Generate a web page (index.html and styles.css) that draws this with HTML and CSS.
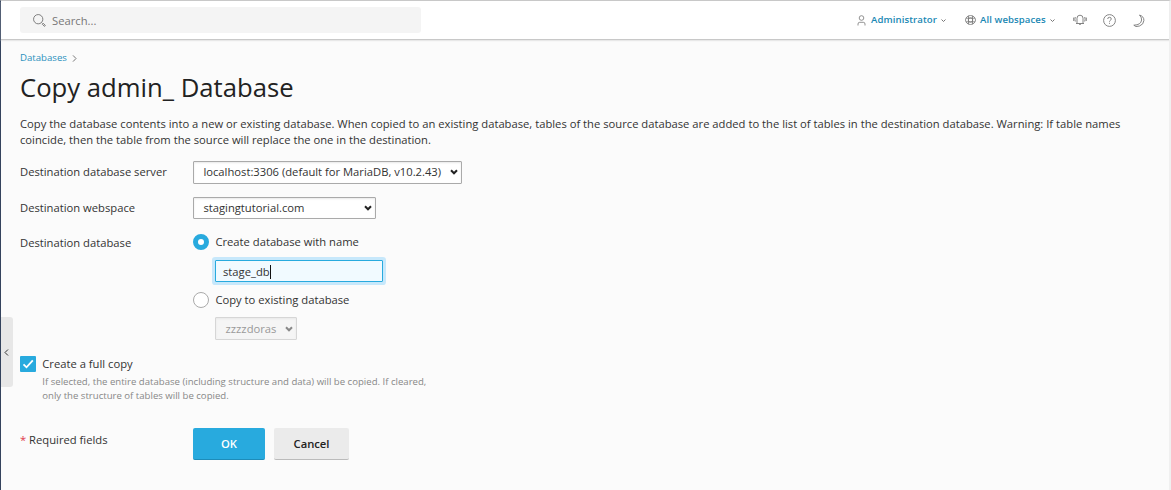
FILE: index.html
```html
<!DOCTYPE html>
<html lang="en">
<head>
<meta charset="utf-8">
<title>Copy admin_ Database</title>
<link rel="stylesheet" href="styles.css">
</head>
<body>
<div class="page">
  <header class="topbar">
    <div class="search">
      <svg class="search-icon" width="13" height="13" viewBox="0 0 14 14"><circle cx="5.6" cy="5.6" r="5"/><path d="M9.2 9.2l1 1M10 11l1-1 2.1 2a.8.8 0 0 1-1.1 1.1z"/></svg>
      <span>Search...</span>
    </div>
    <nav class="tools">
      <a class="tool user">
        <svg width="9" height="11" viewBox="0 0 9 11"><circle cx="4.5" cy="3" r="2.3"/><path d="M1 10.500V9q0-1.700 1.700-1.700h3.600Q8 7.300 8 9v1.500"/></svg>
        <span>Administrator</span>
        <svg class="caret" width="5" height="3" viewBox="0 0 5 3"><path d="M.5.5l2 2 2-2"/></svg>
      </a>
      <a class="tool spaces">
        <svg width="11" height="10" viewBox="0 0 11 10"><ellipse cx="5.500" cy="5" rx="5" ry="4.500"/><ellipse cx="5.500" cy="5" rx="2.300" ry="2.200"/><path d="M3.500.8v8.400M7.500.8v8.400M1 3.200h9M1 6.800h9"/></svg>
        <span>All webspaces</span>
        <svg class="caret" width="5" height="3" viewBox="0 0 5 3"><path d="M.5.5l2 2 2-2"/></svg>
      </a>
      <svg class="bell" width="14" height="12" viewBox="0 0 14 12"><path d="M3 9.500h8M4 9.500V4.200a3 3 0 0 1 6 0v5.300M5.800 9.700q1.200 2 2.400 0M2.300 3q-.9 2.200 0 4.500M.8 3.500q-.5 1.700 0 3.500M11.700 3q.9 2.200 0 4.500M13.200 3.500q.5 1.700 0 3.500"/></svg>
      <svg class="help" width="13" height="13" viewBox="0 0 13 13"><circle cx="6.500" cy="6.500" r="5.900"/><path d="M4.700 5q0-1.700 1.800-1.700T8.300 5c0 1.300-1.800 1.200-1.800 2.700M6.500 8.800v1"/></svg>
      <svg class="moon" width="12" height="13" viewBox="0 0 12 13"><path d="M6.500 1q4.600 1.500 4.400 5.500T6.500 12 .8 11.200Q8 11 8.600 6 8.700 3 6.500 1z"/></svg>
    </nav>
  </header>
  <main class="content">
    <div class="crumbs"><a>Databases</a><svg width="5" height="7" viewBox="0 0 5 7"><path d="M1 .4l3 3.100-3 3.100"/></svg></div>
    <h1>Copy admin_ Database</h1>
    <p class="intro">Copy the database contents into a new or existing database. When copied to an existing database, tables of the source database are added to the list of tables in the destination database. Warning: If table names<br>coincide, then the table from the source will replace the one in the destination.</p>
    <div class="row server">
      <span class="label">Destination database server</span>
      <div class="select wide"><span>localhost:3306 (default for MariaDB, v10.2.43)</span><svg width="8" height="6" viewBox="0 0 8 6"><path d="M1 1.300l3 3 3-3"/></svg></div>
    </div>
    <div class="row space">
      <span class="label">Destination webspace</span>
      <div class="select medium"><span>stagingtutorial.com</span><svg width="8" height="6" viewBox="0 0 8 6"><path d="M1 1.300l3 3 3-3"/></svg></div>
    </div>
    <div class="row database">
      <span class="label">Destination database</span>
      <div class="choices">
        <div class="option"><span class="radio checked"></span><span>Create database with name</span></div>
        <div class="field"><span>stage_db</span><i class="cursor"></i></div>
        <div class="option"><span class="radio"></span><span>Copy to existing database</span></div>
        <div class="select small disabled"><span>zzzzdoras</span><svg width="8" height="6" viewBox="0 0 8 6"><path d="M1 1.300l3 3 3-3"/></svg></div>
      </div>
    </div>
    <div class="full-copy">
      <span class="checkbox"><svg width="12" height="10" viewBox="0 0 12 10"><path d="M1.500 5.300l3 3L10.800 1.300"/></svg></span>
      <div>
        <div class="full-label">Create a full copy</div>
        <div class="hint">If selected, the entire database (including structure and data) will be copied. If cleared,<br>only the structure of tables will be copied.</div>
      </div>
    </div>
    <div class="actions">
      <span class="required"><b>*</b> Required fields</span>
      <button class="button primary">OK</button>
      <button class="button">Cancel</button>
    </div>
  </main>
  <div class="drawer"><svg width="5" height="7" viewBox="0 0 5 7"><path d="M4 .5l-3 3 3 3"/></svg></div>
</div>
</body>
</html>
```
FILE: styles.css
```css
* { box-sizing: border-box; }
body {
  margin: 0;
  height: 490px;
  overflow: hidden;
  font: 11.23px/16px "Open Sans", sans-serif;
  color: #333;
  background: #fbfbfb;
}
svg { display: block; flex: none; fill: none; stroke: #777; }
.page {
  position: relative;
  height: 490px;
  border-top: 1px solid #c8c8c8;
  border-right: 2px solid #f0f0f0;
  border-left: 1px solid #34435d;
}
.topbar {
  display: flex;
  justify-content: space-between;
  height: 39px;
  padding: 6px 24px 0 19px;
  background: #fff;
  border-bottom: 1px solid #c8c8c8;
  box-shadow: 0 1px 1px #e8e8e8;
}
.search {
  display: flex;
  align-items: center;
  width: 401px;
  height: 26px;
  padding: 1px 0 0 13px;
  gap: 6px;
  border-radius: 3px;
  background: #f4f4f4;
  color: #777;
}
.tools { display: flex; align-items: center; height: 26px; }
.tool { display: flex; align-items: center; color: #1a88b4; font-weight: 600; font-size: 9.6px; letter-spacing: .08px; white-space: nowrap; }
.tool svg { stroke-width: .8; }
.tool .caret { stroke-width: 1; }
.tool span { width: 66px; margin: 0 4px 0 5px; }
.spaces { margin-left: 20px; }
.spaces span { margin-left: 4px; }
.bell { margin-left: 18px; }
.help { margin-left: 16px; }
.moon { margin-left: 17px; }
.user { margin-right: -1px; }
.bell, .help { stroke-width: .9; }
.moon { stroke-width: .9; }
.content { padding: 9px 19px 0; }
.crumbs { display: flex; align-items: center; gap: 5px; height: 18px; color: #2b91bd; font-size: 9.63px; }
h1 { margin: 4px 0 0; height: 36px; font-size: 25.68px; line-height: 34px; font-weight: 400; color: #222; white-space: nowrap; }
.intro { margin: 9px 0 0; white-space: nowrap; }
.row { display: flex; }
.label { width: 173px; flex: none; white-space: nowrap; padding-top: 3px; }
.server { margin-top: 13px; height: 36px; }
.space { height: 36px; }
.select {
  display: flex;
  align-items: center;
  justify-content: space-between;
  height: 23px;
  padding: 0 3px 1px 9.4px;
  border: 1px solid #aaa;
  border-radius: 1px;
  background: #fff;
  box-shadow: inset 0 1px 2px #e8e8e8;
  white-space: nowrap;
}
.select svg { stroke: #222; stroke-width: 2; }
.wide { width: 269px; }
.medium { width: 183px; height: 22px; }
.small { width: 82px; margin: 9px 0 0 22px; padding: 1px 3px 0 9.6px; }
.disabled { color: #999; background: #f5f5f5; border-color: #d6d6d6; }
.disabled svg { stroke: #888; }
.database .label { padding-top: 2px; }
.option { display: flex; align-items: center; gap: 6.4px; height: 16px; white-space: nowrap; }
.radio { width: 16px; height: 16px; border: 1px solid #aaa; border-radius: 50%; background: #fff; }
.radio.checked { border: 5px solid #28aade; }
.choices { padding-top: 1px; }
.field {
  display: flex;
  align-items: center;
  width: 168px;
  height: 22px;
  margin: 10px 0 10px 22px;
  padding: 2px 0 0 7px;
  border: 1px solid #28aade;
  border-radius: 1px;
  background: #f1faff;
  box-shadow: 0 0 0 3px #c7e8fb;
}
.cursor { width: 1px; height: 14px; background: #111; }
.full-copy { display: flex; gap: 6.3px; margin-top: 16px; height: 46px; }
.checkbox { display: grid; place-items: center; width: 16px; height: 16px; border-radius: 1px; background: #28aade; flex: none; }
.checkbox svg { stroke: #fff; stroke-width: 1.8; }
.hint { margin-top: 3px; font-size: 9.61px; line-height: 14px; color: #888; white-space: nowrap; }
.actions { display: flex; margin-top: 26px; }
.required { width: 173px; padding-top: 4px; }
.required b { color: #e0384b; font-weight: 400; }
.button {
  width: 75px;
  height: 32px;
  padding: 0;
  border: 0;
  border-bottom: 1px solid #bbb;
  border-radius: 2px;
  background: #ebebeb;
  color: #222;
  font: 600 11.23px/30px "Open Sans", sans-serif;
}
.primary { width: 72px; margin-right: 9px; background: #28aade; border-color: #1d8cb9; color: #fff; }
.drawer {
  position: absolute;
  left: 0;
  top: 316px;
  display: grid;
  place-items: center;
  width: 12px;
  height: 70px;
  padding-right: 2px;
  border-radius: 0 3px 3px 0;
  background: #e7e7e7;
}
.drawer svg { stroke: #333; }
```
